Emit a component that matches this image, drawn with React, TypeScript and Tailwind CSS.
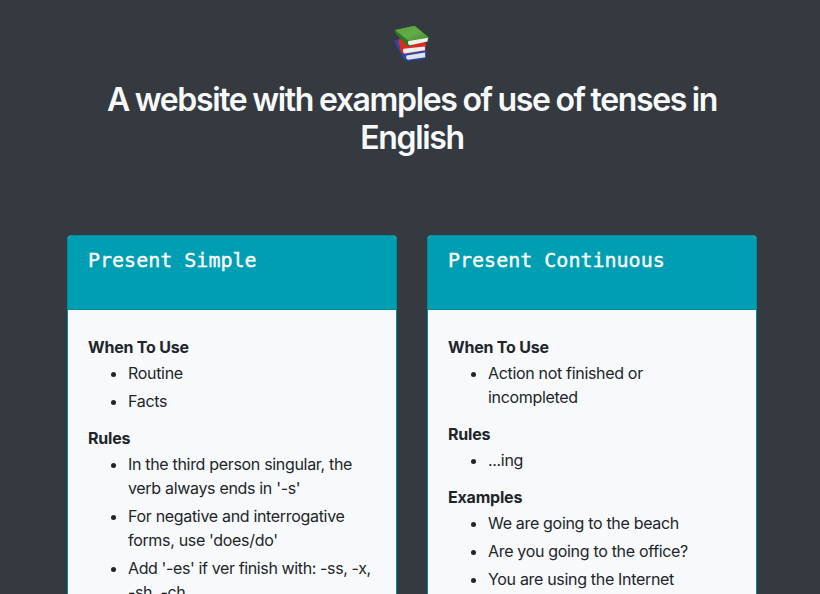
import React from "react";

type Item = { lines: string[]; tight?: boolean };
type Section = { title: string; items: Item[] };

const simple: Section[] = [
  { title: "When To Use", items: [{ lines: ["Routine"] }, { lines: ["Facts"] }] },
  {
    title: "Rules",
    items: [
      { lines: ["In the third person singular, the", "verb always ends in '-s'"] },
      { lines: ["For negative and interrogative", "forms, use 'does/do'"] },
      { lines: ["Add '-es' if ver finish with: -ss, -x,", "-sh, -ch"], tight: true },
    ],
  },
];

const continuous: Section[] = [
  { title: "When To Use", items: [{ lines: ["Action not finished or", "incompleted"] }] },
  { title: "Rules", items: [{ lines: ["...ing"] }] },
  {
    title: "Examples",
    items: [
      { lines: ["We are going to the beach"] },
      { lines: ["Are you going to the office?"] },
      { lines: ["You are using the Internet"] },
    ],
  },
];

function Books() {
  return (
    <svg className="ml-1" width="44" height="44" viewBox="0 0 44 44" aria-hidden="true">
      <defs>
        <linearGradient id="cover" x1="0" y1="0" x2="1" y2="1">
          <stop offset="0" stopColor="#5c9c3c" />
          <stop offset="0.5" stopColor="#64ac48" />
          <stop offset="1" stopColor="#3f8d30" />
        </linearGradient>
      </defs>
      <path d="M4.5 18.5 L10 17 L36 28.5 L36.3 30 L35.5 36.5 L18 39 Q15 39.3 14 37 L5 21Z" fill="#2748b0" />
      <path d="M16.5 33.5 L35 30.5 L35.3 35.2 L18 37.8 Q15.2 36.5 16.5 33.5Z" fill="#dfe3ec" />
      <path d="M8.5 17.5 L12 16 L34 20 L36 21.5 L35.3 28.5 L14 32.2 Q11.8 32 11 30 L8.5 20Z" fill="#da2b20" />
      <path d="M13.5 26.8 L34.8 24.5 L35 28.3 L14.5 31.5 Q12 30 13.5 26.8Z" fill="#eceef0" />
      <path d="M5 8 L24.5 3.8 L39 15.5 L38.8 17 L20 24.2 Q17 24.5 15.5 22.5 L5 10.5Z" fill="#2f7726" />
      <path d="M5 8 L24.5 3.8 L39 15.5 L18.5 18.8Z" fill="url(#cover)" />
      <path d="M18.5 19 L38 15.8 L37.5 19.6 L20 23.3 Q16.8 22 18.5 19Z" fill="#f0f1ed" />
    </svg>
  );
}

function Card({ title, sections }: { title: string; sections: Section[] }) {
  return (
    <article className="h-[600px] w-[330px] overflow-hidden rounded border border-[#008c9b] bg-[#f8f9fb]">
      <header className="h-[74px] border-b border-[#028b9b] bg-[#009eb3] px-5 pt-3">
        <h2 className="font-['DejaVu_Sans_Mono',monospace] text-[20px] leading-6 text-white [-webkit-text-stroke:0.35px_white]">
          {title}
        </h2>
      </header>
      <div className="px-5 pt-[25px]">
        {sections.map((s) => (
          <section key={s.title} className="mb-[13px]">
            <h3 className="text-[16px] leading-6 font-bold tracking-[-0.2px]">{s.title}</h3>
            <ul className="list-disc pt-[2px] pl-10">
              {s.items.map((it) => (
                <li
                  key={it.lines[0]}
                  className={
                    it.tight
                      ? "mb-1 text-[16px] leading-6 tracking-[-0.38px] whitespace-nowrap"
                      : "mb-1 text-[16px] leading-6 tracking-[-0.32px] whitespace-nowrap"
                  }
                >
                  {it.lines.map((l) => (
                    <span key={l} className="block">{l}</span>
                  ))}
                </li>
              ))}
            </ul>
          </section>
        ))}
      </div>
    </article>
  );
}

export default function App() {
  return (
    <main className="h-[594px] w-[820px] overflow-hidden bg-[#343a40] font-['Inter',sans-serif] text-[#212529]">
      <header className="flex h-[235px] flex-col items-center pt-[22px]">
        <Books />
        <h1 className="mt-[15px] ml-1 text-center text-[32px] leading-[38px] font-semibold tracking-[-1.36px] [word-spacing:-0.8px] text-[#f8f9fa]">
          A website with examples of use of tenses in
          <br />
          English
        </h1>
      </header>
      <div className="flex gap-[30px] pl-[67px]">
        <Card title="Present Simple" sections={simple} />
        <Card title="Present Continuous" sections={continuous} />
      </div>
    </main>
  );
}
